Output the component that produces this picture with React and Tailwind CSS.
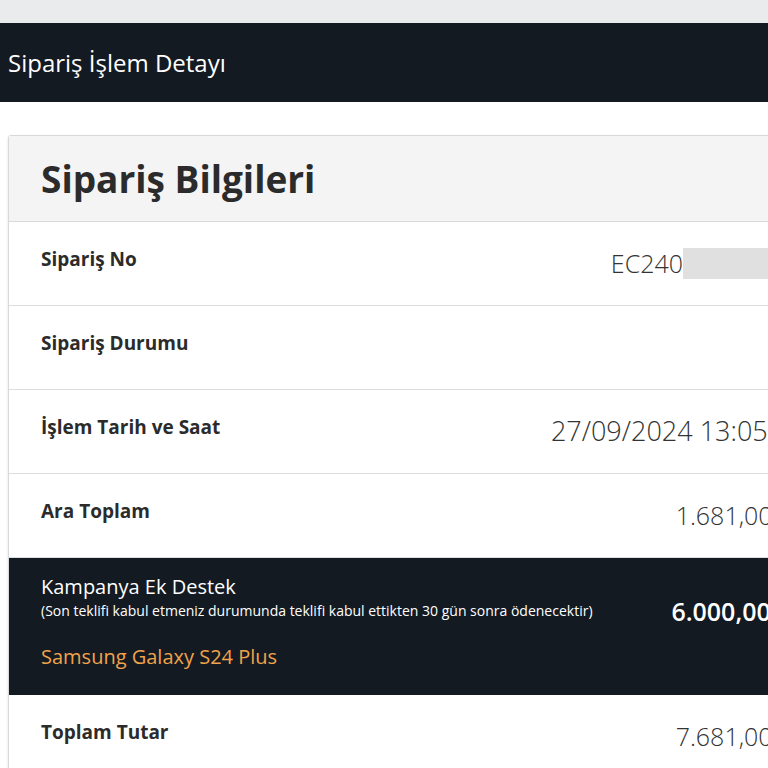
import React from 'react';

const rows = [
  { label: 'Sipariş No', value: 'EC240', redacted: true },
  { label: 'Sipariş Durumu', value: '' },
  { label: 'İşlem Tarih ve Saat', value: '27/09/2024 13:05:42', big: true },
  { label: 'Ara Toplam', value: '1.681,00 TL' },
];

const Row = ({ label, value, redacted, big }) => (
  <div className="flex h-[84px] items-start justify-between border-b border-[#dedede] pl-[32px] pr-[40px] pt-[24px]">
    <span className="text-[19px] font-bold leading-[26px] text-[#2b2b2b]">{label}</span>
    <span className={`flex items-center font-light leading-[34px] text-[#333] ${big ? 'text-[27px]' : 'text-[25px]'}`}>
      {value}
      {redacted && <span className="inline-block h-[31px] w-[122px] bg-[#e0e0e0]" />}
    </span>
  </div>
);

export default function App() {
  return (
    <div className="h-[768px] w-[768px] overflow-hidden bg-white" style={{ fontFamily: '"Open Sans", "Noto Sans", sans-serif' }}>
      <div className="h-[23px] bg-[#e9ebec]" />
      <div className="flex h-[79px] items-center bg-[#131a22] px-2">
        <h1 className="text-[24px] leading-none text-white">Sipariş İşlem Detayı</h1>
      </div>

      <div className="pl-[8px] pt-[33px]">
        <div className="w-[838px] rounded-[3px] border border-[#d9d9d9] bg-white shadow-sm">
          {/* Header */}
          <div className="flex h-[86px] items-center border-b border-[#d9d9d9] bg-[#f4f4f4] pl-[32px]">
            <h2 className="text-[37px] font-bold leading-none text-[#2b2b2b]">Sipariş Bilgileri</h2>
          </div>

          {rows.map((r) => (
            <Row key={r.label} {...r} />
          ))}

          {/* Campaign support */}
          <div className="flex h-[137px] items-start justify-between bg-[#131a22] pl-[32px] pr-[40px] pt-[16px]">
            <div className="flex flex-col">
              <span className="text-[20px] leading-[26px] text-white">Kampanya Ek Destek</span>
              <span className="text-[14px] leading-[22px] text-white">
                (Son teklifi kabul etmeniz durumunda teklifi kabul ettikten 30 gün sonra ödenecektir)
              </span>
              <span className="mt-[22px] text-[20px] leading-[26px] text-[#f0a34a]">Samsung Galaxy S24 Plus</span>
            </div>
            <span className="mt-[20px] text-[25px] font-semibold leading-[34px] text-white">6.000,00 TL</span>
          </div>

          <div className="flex h-[84px] items-start justify-between pl-[32px] pr-[40px] pt-[24px]">
            <span className="text-[19px] font-bold leading-[26px] text-[#2b2b2b]">Toplam Tutar</span>
            <span className="text-[25px] font-light leading-[34px] text-[#333]">7.681,00 TL</span>
          </div>
        </div>
      </div>
    </div>
  );
}
